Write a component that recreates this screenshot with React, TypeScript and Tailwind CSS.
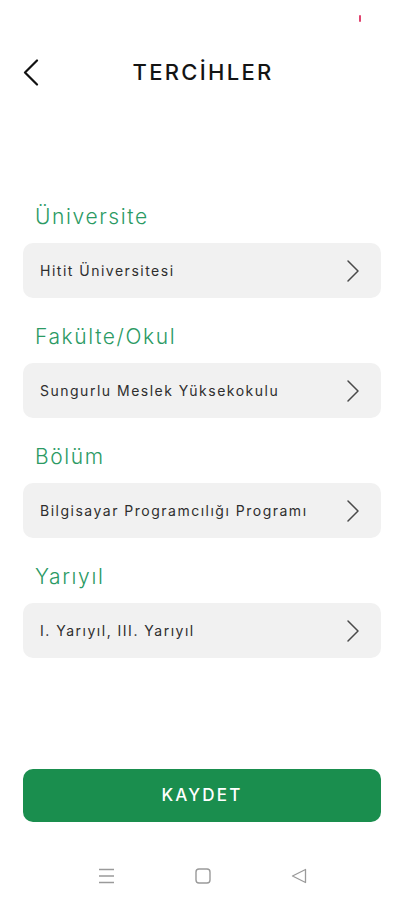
import React from "react";

const Chevron = () => (
  <svg width="14" height="24" viewBox="0 0 14 24" fill="none">
    <path d="M2 2 L12 12 L2 22" stroke="#4a4a4a" strokeWidth="1.5" strokeLinecap="round" strokeLinejoin="round" />
  </svg>
);

const sections = [
  { label: "Üniversite", value: "Hitit Üniversitesi" },
  { label: "Fakülte/Okul", value: "Sungurlu Meslek Yüksekokulu" },
  { label: "Bölüm", value: "Bilgisayar Programcılığı Programı" },
  { label: "Yarıyıl", value: "I. Yarıyıl, III. Yarıyıl" },
];

export default function App() {
  return (
    <div className="w-[404px] h-[900px] bg-white flex flex-col font-['Inter',sans-serif]">
      <div className="h-[40px] flex items-start justify-end pr-[43px] pt-[15px]">
        <div className="w-[2px] h-[7px] bg-[#e0436f] rounded-sm" />
      </div>
      <div className="relative h-[64px] flex items-center justify-center">
        <div className="absolute left-[23px] top-[19px]">
          <svg width="16" height="27" viewBox="0 0 16 27" fill="none">
            <path d="M14 1.5 L2 13.5 L14 25.5" stroke="#111" strokeWidth="2.2" strokeLinecap="round" strokeLinejoin="round" />
          </svg>
        </div>
        <div className="text-[22px] font-medium tracking-[2.3px] text-[#141414] pl-[2px]">TERCİHLER</div>
      </div>
      <div className="h-[96px]" />
      <div className="flex flex-col px-[23px]">
        {sections.map((s) => (
          <div key={s.label} className="flex flex-col">
            <div className="h-[43px] pl-[12px] pt-[2px] text-[21px] font-light tracking-[1.6px] text-[#2b9a64] leading-[30px]">{s.label}</div>
            <div className="h-[55px] rounded-[10px] bg-[#f1f1f1] flex items-center justify-between pl-[17px] pr-[21px] mb-[22px]">
              <span className="text-[14px] text-[#2e2e2e] tracking-[1.5px]">{s.value}</span>
              <Chevron />
            </div>
          </div>
        ))}
      </div>
      <div className="flex-1" />
      <div className="px-[23px]">
        <div className="h-[53px] rounded-[10px] bg-[#1a8e4e] flex items-center justify-center text-white text-[17px] font-medium tracking-[2.2px]">
          KAYDET
        </div>
      </div>
      <div className="h-[78px] flex items-start justify-between pl-[99px] pr-[97px] pt-[46px]">
        <svg width="15" height="16" viewBox="0 0 15 16" fill="none">
          <path d="M0 1.5 H15 M0 8 H15 M0 14.5 H15" stroke="#9a9a9a" strokeWidth="1.3" />
        </svg>
        <svg width="16" height="16" viewBox="0 0 16 16" fill="none">
          <rect x="1" y="1" width="14" height="14" rx="3" stroke="#9a9a9a" strokeWidth="1.4" />
        </svg>
        <svg width="16" height="16" viewBox="0 0 16 16" fill="none">
          <path d="M14.5 1.5 L1.5 8 L14.5 14.5 Z" stroke="#9a9a9a" strokeWidth="1.3" strokeLinejoin="round" />
        </svg>
      </div>
    </div>
  );
}
